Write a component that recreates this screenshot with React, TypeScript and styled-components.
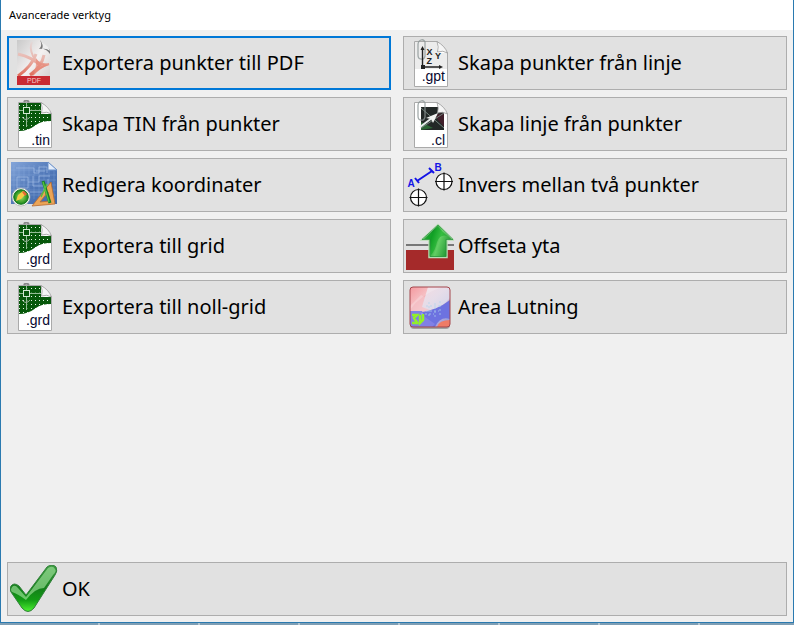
import React from "react";
import styled, { createGlobalStyle } from "styled-components";

const GlobalStyle = createGlobalStyle`
  * { box-sizing: border-box; }
  body { margin: 0; background: #f0f0f0; }
`;

const Desktop = styled.div`
  display: flex;
  flex-direction: column;
  min-height: 100vh;
  padding-bottom: 2px;
  background: repeating-linear-gradient(90deg, #7f9fb5 0 98px, #b5c5d0 98px 100px);
`;

const Dialog = styled.main`
  flex: 1;
  display: flex;
  flex-direction: column;
  background: #f0f0f0;
  border: 1px solid #2a7ab0;
  border-top: 0;
`;

const TitleBar = styled.header`
  height: 30px;
  padding: 0 8px;
  background: #fff;
`;

const Title = styled.h1`
  margin: 0;
  font: 400 11px/30px "Noto Sans", sans-serif;
  color: #000;
`;

const Content = styled.div`
  flex: 1;
  display: flex;
  flex-direction: column;
  justify-content: space-between;
  padding: 6px;
`;

const ToolGrid = styled.div`
  display: grid;
  grid-template-columns: 1fr 1fr;
  gap: 7px 12px;
`;

const ToolButton = styled.button<{ $focused?: boolean }>`
  display: flex;
  align-items: center;
  gap: 4px;
  width: 100%;
  height: 54px;
  padding: 0 2px;
  border: 1px solid ${(p) => (p.$focused ? "#0078d7" : "#adadad")};
  box-shadow: ${(p) => (p.$focused ? "inset 0 0 0 1px #0078d7" : "none")};
  border-radius: 0;
  background: #e1e1e1;
  color: #000;
  font: 400 20px/28px "Noto Sans", sans-serif;
  text-align: left;
  white-space: nowrap;
  outline: none;
`;

const Icon = styled.svg.attrs({ viewBox: "0 0 48 48", "aria-hidden": true })`
  flex: none;
  width: 48px;
  height: 48px;
`;

const FileExtension = styled.text`
  font: 14px "Liberation Sans", sans-serif;
  fill: #080830;
`;

const AxisLetter = styled.text`
  font: 700 9px "Liberation Sans", sans-serif;
  fill: #222;
`;

const PointLetter = styled.text`
  font: 700 10px "Liberation Sans", sans-serif;
  fill: #1414e6;
`;

const PdfBadge = styled.text`
  font: 7px "Liberation Sans", sans-serif;
  fill: #f6c9c9;
`;

const Paper = () => (
  <path d="M8.5 2.5H31L41.5 14V47.5H8.5Z" fill="#fff" stroke="#aaa" />
);

const Fold = () => (
  <path d="M31 2.5Q33 8 31.500 13Q37 11 41.5 14Q39 7 31 2.5Z" fill="#f5f5f5" stroke="#999" strokeWidth=".8" />
);

const Clip = () => (
  <path d="M12 6Q12 2 15 1Q18 0 19 3V17Q18 21 15 20Q12 20 12 16V5" fill="none" stroke="#8c9696" strokeWidth="1.3" opacity=".8" />
);

function PdfIcon() {
  return (
    <Icon>
      <defs>
        <linearGradient id="pdfPaper" x2="1" y2="1">
          <stop stopColor="#c9c9c9" />
          <stop offset=".5" stopColor="#f4f1f1" />
          <stop offset="1" stopColor="#cfcaca" />
        </linearGradient>
        <linearGradient id="pdfSwirl" gradientUnits="userSpaceOnUse" x1="0" y1="2" x2="0" y2="38">
          <stop stopColor="#e3dada" />
          <stop offset=".5" stopColor="#eab5ac" />
          <stop offset="1" stopColor="#dd6552" />
        </linearGradient>
      </defs>
      <path d="M7 1H30L40 12V46H7Z" fill="url(#pdfPaper)" />
      <path d="M22 3Q19 8 23 17Q28 27 39 25Q29 28 22 36" fill="none" stroke="url(#pdfSwirl)" strokeWidth="2" />
      <path d="M8 15Q22 18 31 27M26 15Q22 27 8 37M34 16Q32 27 20 36" fill="none" stroke="url(#pdfSwirl)" strokeWidth="3" />
      <path d="M26 19Q30 26 39 26Q30 29 23 37Q27 27 26 19Z" fill="#e88b7c" opacity=".7" />
      <path d="M30 1Q33 7 29 10Q36 9 40 15V11Z" fill="#777" />
      <path d="M30 1Q34 6 32 10Q36 9 40 12L38 8Z" fill="#eee" />
      <path d="M7 37H40V46H7Z" fill="#c92a32" />
      <PdfBadge x="17" y="44">PDF</PdfBadge>
    </Icon>
  );
}

function TerrainIcon({ id, extension, baseline }: { id: string; extension: string; baseline: number }) {
  return (
    <Icon>
      <defs>
        <pattern id={id} width="4" height="4" patternUnits="userSpaceOnUse">
          <rect width="4" height="4" fill="#07580b" />
          <rect x="1" y="1" width="1" height="1" fill="#e4f5e4" />
        </pattern>
      </defs>
      <Paper />
      <path d="M9 3H31V14H41V21Q31 21 26 25Q18 31 9 31Z" fill={`url(#${id})`} />
      <path d="M9 10.5H31M16.5 3V29" stroke="#07580b" strokeWidth="2.5" />
      <path d="M9 10.5H14M20 10.5H31M16.5 3V7M16.5 14V27" stroke="#b9d5ba" strokeWidth=".8" />
      <rect x="13.5" y="7.5" width="6" height="6" fill="#07580b" stroke="#d5ead5" />
      <path d="M14 2Q16-1 19 2" fill="none" stroke="#888" strokeWidth="2" />
      <path d="M12 17Q16 22 20 17" fill="none" stroke="#9bb09b" />
      <Fold />
      <FileExtension x="40" y={baseline} textAnchor="end">{extension}</FileExtension>
    </Icon>
  );
}

const TinIcon = () => <TerrainIcon id="tinMesh" extension=".tin" baseline={45} />;
const GridIcon = () => <TerrainIcon id="gridMesh" extension=".grd" baseline={42} />;
const ZeroGridIcon = () => <TerrainIcon id="zeroGridMesh" extension=".grd" baseline={42} />;

function BlueprintIcon() {
  return (
    <Icon>
      <defs>
        <linearGradient id="blueprint" x2="1" y2="1">
          <stop stopColor="#84a5d9" />
          <stop offset=".5" stopColor="#5279b9" />
          <stop offset="1" stopColor="#3f68aa" />
        </linearGradient>
        <radialGradient id="editBall">
          <stop stopColor="#a7e665" />
          <stop offset="1" stopColor="#148316" />
        </radialGradient>
      </defs>
      <path d="M1 1H38L47 9V43H1Z" fill="url(#blueprint)" />
      <path d="M4 4V40M9 4V40M14 4V30M19 4V35M24 4V38M29 4V38M34 4V35M39 9V38M44 10V40M1 9H44M1 14H46M1 19H46M1 24H46M1 29H46M1 34H46" stroke="#9fbce8" strokeWidth=".5" opacity=".5" />
      <path d="M6 7H24V12H29V6H37V12M7 16H18V27H7ZM18 21H29V15H40M23 15V25H34V31H20M11 19H15M26 10H35M38 18V28" fill="none" stroke="#a9c2e8" strokeWidth=".8" opacity=".8" />
      <path d="M38 1V9H47Z" fill="#e4edfa" stroke="#688fc9" />
      <path d="M22 45L41 21L45 43ZM30 41L38 31L40 40Z" fill="#eba456" fillRule="evenodd" stroke="#b86a30" strokeWidth=".8" />
      <path d="M33 20L40 42" stroke="#168126" strokeWidth="3" />
      <path d="M33 21L39 41M37 23L31 36" stroke="#55bf42" strokeWidth="1.4" />
      <circle cx="11" cy="36" r="9" fill="#fff" stroke="#a7aaa7" strokeWidth=".7" />
      <circle cx="11" cy="36" r="7.3" fill="url(#editBall)" stroke="#187722" />
      <path d="M6 40L8 34L13 30L16 33L11 38Z" fill="#f5ca44" />
      <path d="M12 31L14 30L17 33L15 35Z" fill="#e66936" />
    </Icon>
  );
}

function PointFileIcon() {
  return (
    <Icon>
      <Paper />
      <path d="M9 3H31V14H41V30H9Z" fill="#ececec" />
      <Clip />
      <path d="M16.5 9V28H35" fill="none" stroke="#222" strokeWidth="1.4" />
      <path d="M16.5 7L14.5 11H18.5ZM37 28L33 26V30Z" fill="#222" />
      <rect x="15" y="26" width="4" height="4" fill="#222" />
      <AxisLetter x="20.5" y="16">X</AxisLetter>
      <AxisLetter x="20.5" y="25">Z</AxisLetter>
      <AxisLetter x="29" y="20">Y</AxisLetter>
      <Fold />
      <FileExtension x="39" y="42" textAnchor="end">.gpt</FileExtension>
    </Icon>
  );
}

function LineFileIcon() {
  return (
    <Icon>
      <Paper />
      <path d="M15 7H32L38 13V30H15Z" fill="#222827" />
      <path d="M28 15L38 13V27Z" fill="#40202b" />
      <path d="M15 22L27 28L15 30Z" fill="#2a6535" />
      <path d="M15 8L38 28M15 28L38 13" stroke="#71817b" />
      <path d="M14 27L26 18" stroke="#e8eeee" strokeWidth="2" />
      <path d="M32 13L27 23L25 19L20 18Z" fill="#f1f3f1" />
      <Clip />
      <Fold />
      <FileExtension x="39" y="45" textAnchor="end">.cl</FileExtension>
    </Icon>
  );
}

function InverseIcon() {
  return (
    <Icon>
      <PointLetter x="1.5" y="26">A</PointLetter>
      <PointLetter x="28.5" y="10">B</PointLetter>
      <path d="M11 20L26 10M9 17L13 22M23 7L28 12" stroke="#1414e6" strokeWidth="2" />
      <g fill="#fff" stroke="#111" strokeWidth="1.2">
        <circle cx="38" cy="20.5" r="8" />
        <circle cx="12.5" cy="36.5" r="8" />
        <path d="M29 20.5H47M38 11.5V29.5M3.5 36.5H21.5M12.5 27.5V45.5" />
      </g>
    </Icon>
  );
}

function OffsetIcon() {
  return (
    <Icon>
      <defs>
        <linearGradient id="offsetArrow" y2=".35">
          <stop stopColor="#58c45a" />
          <stop offset=".4" stopColor="#15942a" />
          <stop offset=".65" stopColor="#62ce63" />
          <stop offset="1" stopColor="#219532" />
        </linearGradient>
      </defs>
      <path d="M0 23H48" stroke="#777" strokeWidth="2" />
      <path d="M0 28H48V48H0Z" fill="#a52a2a" />
      <path d="M32 2.5L47.5 18H41V35.5H23V18H15.5Z" fill="url(#offsetArrow)" stroke="#b9ddb3" strokeWidth="1.5" />
      <path d="M32 3L47 17.5H40V34.5H24V17.5H16Z" fill="none" stroke="#26943a" strokeWidth=".8" />
      <path d="M32 5L41 14Q34 12 31 20Q29 29 25 33V17H19Z" fill="#0bac20" opacity=".5" />
    </Icon>
  );
}

function SlopeIcon() {
  return (
    <Icon>
      <defs>
        <linearGradient id="slopeSky" x2="1" y2="1">
          <stop stopColor="#f27f86" />
          <stop offset=".45" stopColor="#f5ced2" />
          <stop offset="1" stopColor="#8490dd" />
        </linearGradient>
        <linearGradient id="slopeHaze" x2="1" y2="1">
          <stop stopColor="#f3e3ea" />
          <stop offset="1" stopColor="#d3d9ec" />
        </linearGradient>
        <clipPath id="slopeFrame"><rect x="4" y="4" width="40" height="40" rx="3" /></clipPath>
      </defs>
      <rect x="4" y="5" width="40" height="41" rx="4" fill="#777" opacity=".6" />
      <g clipPath="url(#slopeFrame)">
        <rect x="4" y="4" width="40" height="40" fill="url(#slopeSky)" />
        <path d="M4 23L15 12L24 17L20 30L4 37Z" fill="#f3c4ca" opacity=".7" />
        <path d="M22 4H44V15Q36 25 24 27L16 24Z" fill="url(#slopeHaze)" opacity=".9" />
        <path d="M16 29Q31 27 44 17V36Q34 33 29 44H14Z" fill="#6d72e0" />
        <path d="M4 28L16 28L19 34L29 41L26 44H4Z" fill="#8080e6" />
        <path d="M31 44Q33 37 44 37V44Z" fill="#ef7b66" />
        <path d="M20 23H36M20 28H33M23 19V34M29 20V34M34 18V32M15 31H28" stroke="#afd6ed" strokeDasharray="2 2" opacity=".7" />
        <path d="M6 32H11L8 35L12 41M6 40H12M14 32V40L17 37V31" fill="none" stroke="#92ef28" strokeWidth="2.5" />
        <path d="M4 4H36Q15 11 4 27Z" fill="#fff" opacity=".2" />
      </g>
      <rect x="4" y="4" width="40" height="40" rx="3" fill="none" stroke="#a3464c" />
    </Icon>
  );
}

function CheckIcon() {
  return (
    <Icon>
      <defs>
        <linearGradient id="checkFill" x2="0" y2="1">
          <stop stopColor="#3f9d42" />
          <stop offset=".5" stopColor="#137e1a" />
          <stop offset=".75" stopColor="#129c14" />
          <stop offset="1" stopColor="#4df032" />
        </linearGradient>
      </defs>
      <path d="M1 21Q4 17 9 21L16 30L37 2Q42-2 46 2Q48 6 45 10L24 43Q18 50 12 43L1 27Q-1 24 1 21Z" fill="url(#checkFill)" stroke="#31803a" />
      <path d="M2 22Q5 19 8 23L16 32L38 3Q43 0 45 4Q47 6 43 10L34 23Q25 23 16 35Q8 29 2 27Q0 25 2 22Z" fill="#a8e8a3" opacity=".6" />
    </Icon>
  );
}

const tools = [
  { label: "Exportera punkter till PDF", Graphic: PdfIcon, focused: true },
  { label: "Skapa punkter från linje", Graphic: PointFileIcon },
  { label: "Skapa TIN från punkter", Graphic: TinIcon },
  { label: "Skapa linje från punkter", Graphic: LineFileIcon },
  { label: "Redigera koordinater", Graphic: BlueprintIcon },
  { label: "Invers mellan två punkter", Graphic: InverseIcon },
  { label: "Exportera till grid", Graphic: GridIcon },
  { label: "Offseta yta", Graphic: OffsetIcon },
  { label: "Exportera till noll-grid", Graphic: ZeroGridIcon },
  { label: "Area Lutning", Graphic: SlopeIcon },
];

export default function App() {
  return (
    <Desktop>
      <GlobalStyle />
      <Dialog aria-labelledby="dialog-title">
        <TitleBar>
          <Title id="dialog-title">Avancerade verktyg</Title>
        </TitleBar>
        <Content>
          <ToolGrid>
            {tools.map(({ label, Graphic, focused }) => (
              <ToolButton key={label} type="button" $focused={focused}>
                <Graphic />
                {label}
              </ToolButton>
            ))}
          </ToolGrid>
          <ToolButton type="button">
            <CheckIcon />
            OK
          </ToolButton>
        </Content>
      </Dialog>
    </Desktop>
  );
}
